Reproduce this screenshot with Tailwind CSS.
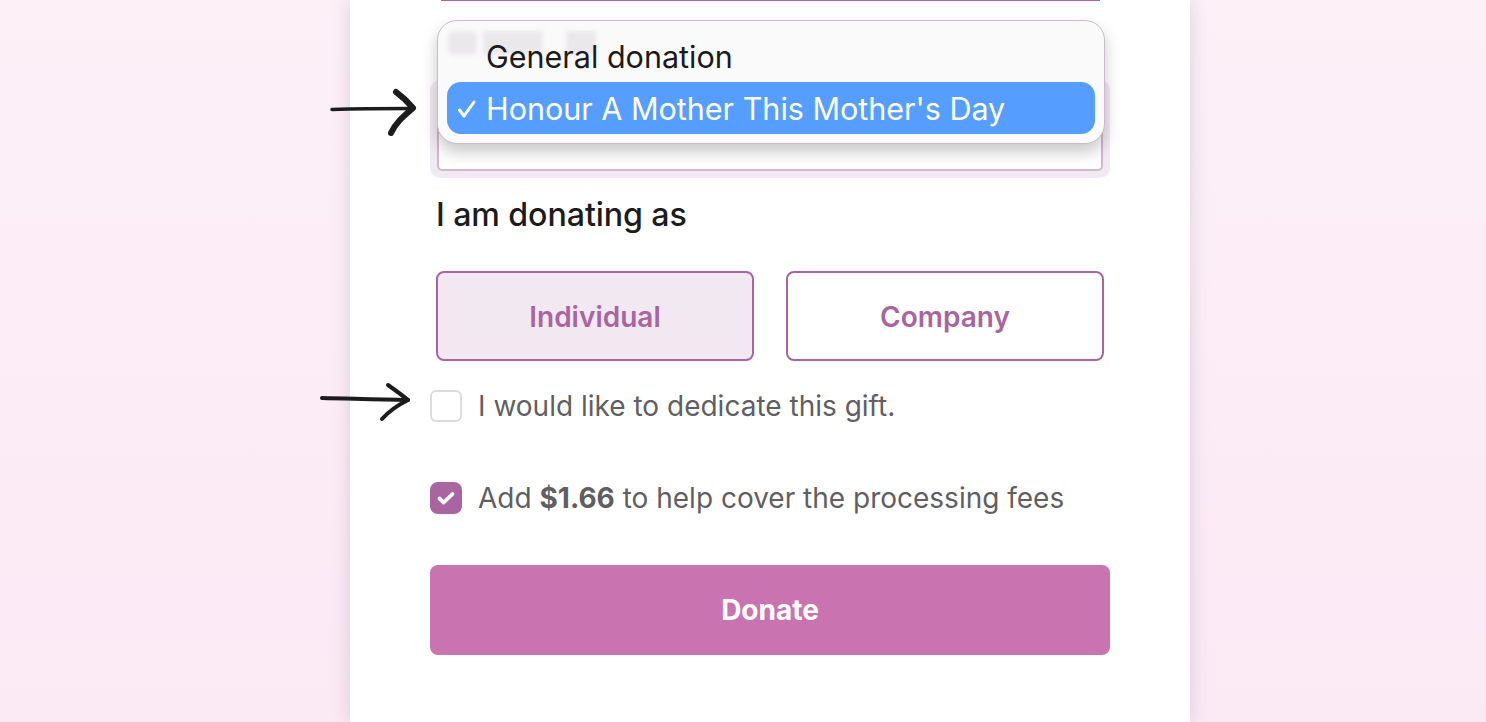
<!DOCTYPE html>
<html lang="en">
<head>
    <meta charset="UTF-8">
    <title>Donate</title>
    <script src="https://cdn.jsdelivr.net/npm/@tailwindcss/browser@4"></script>
</head>
<body class="bg-linear-to-b from-[#fdf0f7] to-[#fbe9f4] h-[722px] overflow-hidden font-['Inter',sans-serif]">
    <!-- Card -->
    <main class="relative w-[840px] h-[722px] ml-[350px] bg-white shadow-[0_0_18px_rgba(70,90,120,0.2)] px-20">
        <!-- Previous field, cut off by the top edge -->
        <div class="ml-[11px] w-[659px] h-px bg-[#a9659f]"></div>

        <!-- Select, mostly under the open menu -->
        <div class="mt-[79px] h-[98px] rounded-[10px] bg-[#f1eaf2] p-[7px]">
            <div class="h-[84px] rounded-[5px] bg-white border-2 border-[#d1b8cf]"></div>
        </div>

        <h2 class="mt-[19px] ml-1.5 text-[32.2px] leading-9 font-medium text-[#1c1c1e] tracking-[-0.1px]">I am donating as</h2>

        <!-- Donor type -->
        <div class="mt-[38px] mx-1.5 grid grid-cols-2 gap-8">
            <button class="h-[90px] pt-0.5 rounded-lg border-2 border-[#a9659f] bg-[#f2e8f2] text-[28px] font-semibold text-[#a9659f]">Individual</button>
            <button class="h-[90px] pt-0.5 rounded-lg border-2 border-[#a9659f] bg-white text-[28px] font-semibold text-[#a9659f]">Company</button>
        </div>

        <!-- Checkboxes -->
        <label class="mt-[29px] flex items-center gap-4 h-8">
            <span class="w-8 h-8 rounded-md border-2 border-[#dcdcdc] bg-white"></span>
            <span class="text-[28px] text-[#5f5f63]">I would like to dedicate this gift.</span>
        </label>
        <label class="mt-[60px] flex items-center gap-4 h-8">
            <span class="w-8 h-8 rounded-lg bg-[#a9659f] flex items-center justify-center">
                <svg class="w-5 h-5" viewBox="0 0 20 20" fill="none" stroke="white" stroke-width="3.800" stroke-linecap="round" stroke-linejoin="round"><path d="M3.500 10.500l4.200 4L16.500 6"/></svg>
            </span>
            <span class="text-[28px] text-[#5f5f63]">Add <b class="font-bold">$1.66</b> to help cover the processing fees</span>
        </label>

        <button class="mt-[51px] w-full h-[90px] rounded-lg bg-[#c973b0] text-[28px] font-bold text-white">Donate</button>

        <!-- Native select menu -->
        <div class="absolute left-[87px] top-5 w-[668px] h-[124px] rounded-[20px] border border-[#c9bcc8] bg-[#fbfafb] shadow-[0_8px_16px_rgba(0,0,0,0.22)] px-[9px]">
            <!-- Label showing blurred through the menu -->
            <div class="absolute left-[10px] top-[10px] flex gap-[6px] blur-[2px]">
                <span class="w-[29px] h-[24px] rounded-md bg-[#ebe8eb]"></span>
                <span class="w-[60px] h-[24px] bg-[#ebe8eb]"></span>
                <span class="w-[11px] h-[24px]"></span>
                <span class="w-[30px] h-[24px] bg-[#ebe8eb]"></span>
            </div>
            <div class="relative h-[61px] pl-[39px] pt-[10px] flex items-center text-[30.5px] text-[#1b1b1d]">General donation</div>
            <div class="relative h-[52px] pt-0.5 rounded-[14px] bg-[#559dff] flex items-center text-[30.5px] text-white">
                <span class="w-[39px] flex justify-center">
                    <svg class="w-5 h-5" viewBox="0 0 20 20" fill="none" stroke="white" stroke-width="3" stroke-linecap="round" stroke-linejoin="round"><path d="M2.500 11l4.500 6L17 3"/></svg>
                </span>
                Honour A Mother This Mother's Day
            </div>
        </div>

        <!-- Hand drawn arrows -->
        <svg class="absolute left-[-30px] top-[85px] w-[110px] h-[55px]" viewBox="0 0 110 55" fill="none" stroke="#1c1c1c" stroke-linecap="round" stroke-linejoin="round">
            <path d="M12 24.500c26-.8 52-1 80-1" stroke-width="3.500"/>
            <path d="M76 7c7 5 12 10 17 16c-8 7-17 14-22 25" stroke-width="6"/>
        </svg>
        <svg class="absolute left-[-40px] top-[378px] w-[110px] h-[50px]" viewBox="0 0 110 50" fill="none" stroke="#1c1c1c" stroke-linecap="round" stroke-linejoin="round">
            <path d="M12 20c26 .5 52 1.500 86 2" stroke-width="4"/>
            <path d="M78 7c7 5 14 10 20 15c-10 5-19 11-26 19" stroke-width="4"/>
        </svg>
    </main>
</body>
</html>
